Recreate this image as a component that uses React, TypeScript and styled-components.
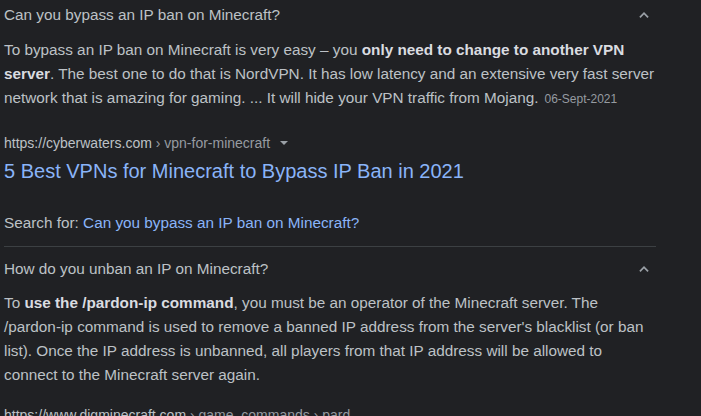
import React from "react";
import styled, { createGlobalStyle } from "styled-components";

const Global = createGlobalStyle`
  html, body { margin: 0; padding: 0; background: #202124; }
  body { font-family: "Liberation Sans", Arial, sans-serif; color: #bdc1c6; }
`;

const Page = styled.div`
  width: 701px;
  height: 416px;
  overflow: hidden;
  background: #202124;
  padding: 0 45px 0 4px;
  box-sizing: border-box;
`;

const Item = styled.section<{ $divider?: boolean; $top?: number }>`
  padding-top: ${(p) => p.$top ?? 0}px;
  border-bottom: ${(p) => (p.$divider ? "1px solid #3c4043" : "none")};
`;

const Question = styled.div`
  display: flex;
  align-items: center;
  justify-content: space-between;
  height: 30px;
  font-size: 15.3px;
  color: #bdc1c6;
`;

const Chevron = styled.svg`
  width: 14px;
  height: 14px;
  margin-right: 5px;
  color: #9aa0a6;
`;

const Answer = styled.p<{ $top: number }>`
  margin: ${(p) => p.$top}px 0 0;
  font-size: 15.3px;
  line-height: 24px;
  color: #bdc1c6;
  b { color: #dadce0; font-weight: bold; }
`;

const DateTag = styled.span`
  font-size: 12px;
  color: #969ba1;
  margin-left: 6px;
  white-space: nowrap;
`;

const Cite = styled.div<{ $top: number }>`
  margin-top: ${(p) => p.$top}px;
  display: flex;
  align-items: center;
  font-size: 14px;
  line-height: 20px;
  color: #bdc1c6;
  white-space: nowrap;
`;

const Crumb = styled.span`
  color: #969ba1;
`;

const Caret = styled.span`
  width: 0;
  height: 0;
  margin-left: 10px;
  border-left: 4px solid transparent;
  border-right: 4px solid transparent;
  border-top: 4px solid #9aa0a6;
`;

const Title = styled.a`
  display: block;
  margin-top: 5px;
  font-size: 20px;
  line-height: 26px;
  color: #8ab4f8;
  text-decoration: none;
`;

const SearchFor = styled.div`
  margin-top: 28px;
  padding-bottom: 12px;
  font-size: 15.3px;
  line-height: 22px;
  color: #bdc1c6;
`;

const SearchLink = styled.a`
  color: #8ab4f8;
  text-decoration: none;
`;

const Up = () => (
  <Chevron viewBox="0 0 24 24" fill="none" stroke="currentColor" strokeWidth={3}>
    <path d="M5 16l7-7 7 7" />
  </Chevron>
);

export default function App() {
  return (
    <>
      <Global />
      <Page>
        <Item $divider>
          <Question>
            <span>Can you bypass an IP ban on Minecraft?</span>
            <Up />
          </Question>
          <Answer $top={8}>
            To bypass an IP ban on Minecraft is very easy – you <b>only need to change to another VPN server</b>. The best one to do that is NordVPN. It has low latency and an extensive very fast server network that is amazing for gaming. ... It will hide your VPN traffic from Mojang.
            <DateTag>06-Sept-2021</DateTag>
          </Answer>
          <Cite $top={22}>
            https://cyberwaters.com<Crumb>&nbsp;› vpn-for-minecraft</Crumb>
            <Caret />
          </Cite>
          <Title href="#">5 Best VPNs for Minecraft to Bypass IP Ban in 2021</Title>
          <SearchFor>
            Search for: <SearchLink href="#">Can you bypass an IP ban on Minecraft?</SearchLink>
          </SearchFor>
        </Item>
        <Item $top={7}>
          <Question>
            <span>How do you unban an IP on Minecraft?</span>
            <Up />
          </Question>
          <Answer $top={7}>
            To <b>use the /pardon-ip command</b>, you must be an operator of the Minecraft server. The /pardon-ip command is used to remove a banned IP address from the server's blacklist (or ban list). Once the IP address is unbanned, all players from that IP address will be allowed to connect to the Minecraft server again.
          </Answer>
          <Cite $top={18}>
            https://www.digminecraft.com<Crumb>&nbsp;› game_commands › pard...</Crumb>
          </Cite>
        </Item>
      </Page>
    </>
  );
}
